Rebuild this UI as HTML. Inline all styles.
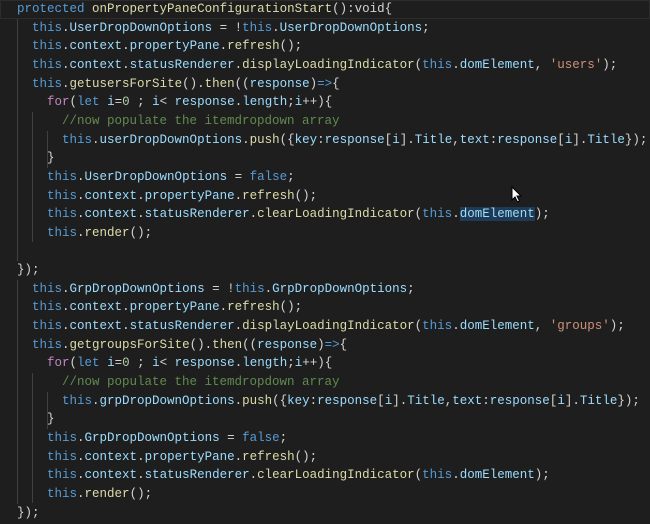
<!DOCTYPE html>
<html><head><meta charset="utf-8"><style>
body{margin:0;width:650px;height:524px;background:#1e1e1e;overflow:hidden;position:relative;font-family:"Liberation Mono",monospace;font-size:12.5px;color:#d4d4d4}
.l{position:absolute;left:2px;height:18.65px;line-height:18.65px;white-space:pre}
.k{color:#569cd6}.p{color:#9cdcfe}.f{color:#dcdcaa}.c{color:#608b4e}.s{color:#ce9178}.n{color:#b5cea8}.r{color:#c586c0}
.g{position:absolute;width:1px;background:#404040}
.hl{position:absolute;left:0;top:0;width:648px;height:17px;border:1px solid #2c2c2c}
.sel{background:#264f78;background:#1e3a55}
</style></head><body>
<div class="hl"></div>
<div class="g" style="left:17px;top:18.6px;height:242px"></div>
<div class="g" style="left:17px;top:279.8px;height:224px"></div>
<div class="g" style="left:32px;top:111.9px;height:130px"></div>
<div class="g" style="left:32px;top:373px;height:130px"></div>
<div class="g" style="left:47px;top:130.5px;height:37px"></div>
<div class="g" style="left:47px;top:391.6px;height:37px"></div>

<div class="l" style="top:0px">  <span class="k">protected</span> <span class="f">onPropertyPaneConfigurationStart</span>():void{</div>
<div class="l" style="top:18.65px">    <span class="k">this</span>.<span class="p">UserDropDownOptions</span> = !<span class="k">this</span>.<span class="p">UserDropDownOptions</span>;</div>
<div class="l" style="top:37.3px">    <span class="k">this</span>.<span class="p">context</span>.<span class="p">propertyPane</span>.<span class="f">refresh</span>();</div>
<div class="l" style="top:55.95px">    <span class="k">this</span>.<span class="p">context</span>.<span class="p">statusRenderer</span>.<span class="f">displayLoadingIndicator</span>(<span class="k">this</span>.<span class="p">domElement</span>, <span class="s">'users'</span>);</div>
<div class="l" style="top:74.6px">    <span class="k">this</span>.<span class="f">getusersForSite</span>().<span class="f">then</span>((<span class="p">response</span>)<span class="k">=&gt;</span>{</div>
<div class="l" style="top:93.25px">      <span class="r">for</span>(<span class="k">let</span> <span class="p">i</span>=<span class="n">0</span> ; <span class="p">i</span>&lt; <span class="p">response</span>.<span class="p">length</span>;<span class="p">i</span>++){</div>
<div class="l" style="top:111.9px">        <span class="c">//now populate the itemdropdown array</span></div>
<div class="l" style="top:130.55px">        <span class="k">this</span>.<span class="p">userDropDownOptions</span>.<span class="f">push</span>({<span class="p">key</span>:<span class="p">response</span>[<span class="p">i</span>].<span class="p">Title</span>,<span class="p">text</span>:<span class="p">response</span>[<span class="p">i</span>].<span class="p">Title</span>});</div>
<div class="l" style="top:149.2px">      }</div>
<div class="l" style="top:167.85px">      <span class="k">this</span>.<span class="p">UserDropDownOptions</span> = <span class="k">false</span>;</div>
<div class="l" style="top:186.5px">      <span class="k">this</span>.<span class="p">context</span>.<span class="p">propertyPane</span>.<span class="f">refresh</span>();</div>
<div class="l" style="top:205.15px">      <span class="k">this</span>.<span class="p">context</span>.<span class="p">statusRenderer</span>.<span class="f">clearLoadingIndicator</span>(<span class="k">this</span>.<span class="p sel">domElement</span>);</div>
<div class="l" style="top:223.8px">      <span class="k">this</span>.<span class="f">render</span>();</div>
<div class="l" style="top:261.1px">  });</div>
<div class="l" style="top:279.75px">    <span class="k">this</span>.<span class="p">GrpDropDownOptions</span> = !<span class="k">this</span>.<span class="p">GrpDropDownOptions</span>;</div>
<div class="l" style="top:298.4px">    <span class="k">this</span>.<span class="p">context</span>.<span class="p">propertyPane</span>.<span class="f">refresh</span>();</div>
<div class="l" style="top:317.05px">    <span class="k">this</span>.<span class="p">context</span>.<span class="p">statusRenderer</span>.<span class="f">displayLoadingIndicator</span>(<span class="k">this</span>.<span class="p">domElement</span>, <span class="s">'groups'</span>);</div>
<div class="l" style="top:335.7px">    <span class="k">this</span>.<span class="f">getgroupsForSite</span>().<span class="f">then</span>((<span class="p">response</span>)<span class="k">=&gt;</span>{</div>
<div class="l" style="top:354.35px">      <span class="r">for</span>(<span class="k">let</span> <span class="p">i</span>=<span class="n">0</span> ; <span class="p">i</span>&lt; <span class="p">response</span>.<span class="p">length</span>;<span class="p">i</span>++){</div>
<div class="l" style="top:373px">        <span class="c">//now populate the itemdropdown array</span></div>
<div class="l" style="top:391.65px">        <span class="k">this</span>.<span class="p">grpDropDownOptions</span>.<span class="f">push</span>({<span class="p">key</span>:<span class="p">response</span>[<span class="p">i</span>].<span class="p">Title</span>,<span class="p">text</span>:<span class="p">response</span>[<span class="p">i</span>].<span class="p">Title</span>});</div>
<div class="l" style="top:410.3px">      }</div>
<div class="l" style="top:428.95px">      <span class="k">this</span>.<span class="p">GrpDropDownOptions</span> = <span class="k">false</span>;</div>
<div class="l" style="top:447.6px">      <span class="k">this</span>.<span class="p">context</span>.<span class="p">propertyPane</span>.<span class="f">refresh</span>();</div>
<div class="l" style="top:466.25px">      <span class="k">this</span>.<span class="p">context</span>.<span class="p">statusRenderer</span>.<span class="f">clearLoadingIndicator</span>(<span class="k">this</span>.<span class="p">domElement</span>);</div>
<div class="l" style="top:484.9px">      <span class="k">this</span>.<span class="f">render</span>();</div>
<div class="l" style="top:503.55px">  });</div>

<svg style="position:absolute;left:511px;top:186px" width="12" height="18" viewBox="0 0 12 18"><path d="M1 1 L1 14 L4 11 L6.5 16 L8.5 15 L6 10 L10 10 Z" fill="#fff" stroke="#000" stroke-width="1"/></svg>
</body></html>
